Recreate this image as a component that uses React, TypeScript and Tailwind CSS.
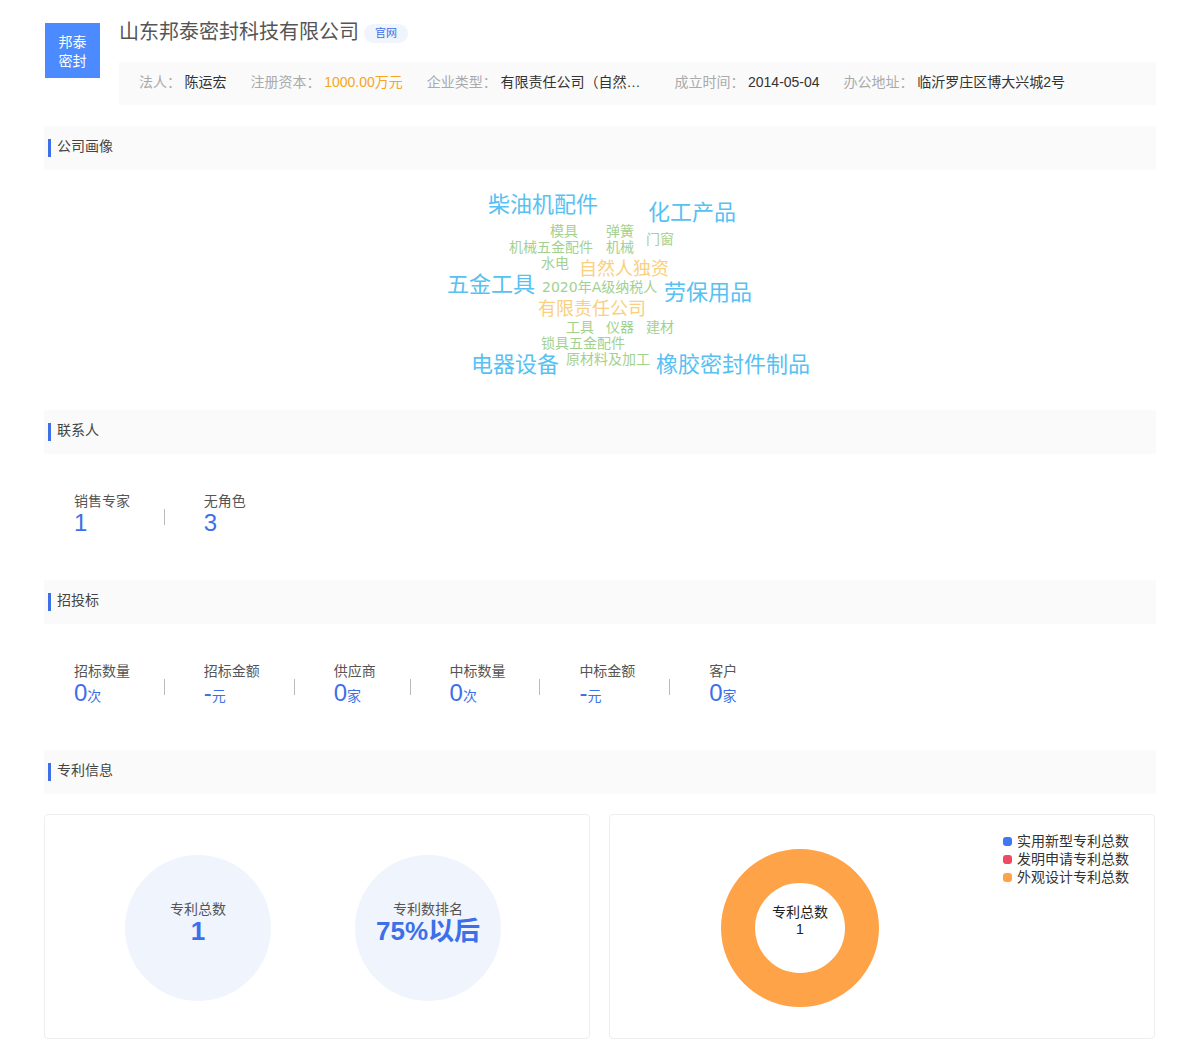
const sans = 'font-["Liberation_Sans","Noto_Sans_CJK_SC",sans-serif]';

const infoItems = [
  { label: '法人：', value: '陈运宏', valueClass: 'text-[#333]' },
  { label: '注册资本：', value: '1000.00万元', valueClass: 'text-[#f5a623]' },
  { label: '企业类型：', value: '有限责任公司（自然…', valueClass: 'text-[#333] w-[150px] whitespace-nowrap' },
  { label: '成立时间：', value: '2014-05-04', valueClass: 'text-[#333]' },
  { label: '办公地址：', value: '临沂罗庄区博大兴城2号', valueClass: 'text-[#333]' },
];

const words = [
  { text: '柴油机配件', className: 'left-[444px] top-[24px] text-[22px] text-[#56c1f2]' },
  { text: '化工产品', className: 'left-[604px] top-[32px] text-[22px] text-[#56c1f2]' },
  { text: '模具', className: 'left-[506px] top-[54px] text-[14px] text-[#a3d18f]' },
  { text: '弹簧', className: 'left-[562px] top-[54px] text-[14px] text-[#a3d18f]' },
  { text: '门窗', className: 'left-[602px] top-[62px] text-[14px] text-[#a3d18f]' },
  { text: '机械五金配件', className: 'left-[465px] top-[70px] text-[14px] text-[#a3d18f]' },
  { text: '机械', className: 'left-[562px] top-[70px] text-[14px] text-[#a3d18f]' },
  { text: '水电', className: 'left-[497px] top-[86px] text-[14px] text-[#a3d18f]' },
  { text: '自然人独资', className: 'left-[535px] top-[90px] text-[18px] text-[#fad07f]' },
  { text: '五金工具', className: 'left-[403px] top-[104px] text-[22px] text-[#56c1f2]' },
  { text: '2020年A级纳税人', className: 'left-[498px] top-[110px] text-[14px] text-[#a3d18f]' },
  { text: '劳保用品', className: 'left-[620px] top-[112px] text-[22px] text-[#56c1f2]' },
  { text: '有限责任公司', className: 'left-[494px] top-[130px] text-[18px] text-[#fad07f]' },
  { text: '工具', className: 'left-[522px] top-[150px] text-[14px] text-[#a3d18f]' },
  { text: '仪器', className: 'left-[562px] top-[150px] text-[14px] text-[#a3d18f]' },
  { text: '建材', className: 'left-[602px] top-[150px] text-[14px] text-[#a3d18f]' },
  { text: '锁具五金配件', className: 'left-[497px] top-[166px] text-[14px] text-[#a3d18f]' },
  { text: '原材料及加工', className: 'left-[522px] top-[182px] text-[14px] text-[#a3d18f]' },
  { text: '电器设备', className: 'left-[427px] top-[184px] text-[22px] text-[#56c1f2]' },
  { text: '橡胶密封件制品', className: 'left-[612px] top-[184px] text-[22px] text-[#56c1f2]' },
];

const contacts = [
  { label: '销售专家', value: '1', unit: '' },
  { label: '无角色', value: '3', unit: '' },
];

const bids = [
  { label: '招标数量', value: '0', unit: '次' },
  { label: '招标金额', value: '-', unit: '元' },
  { label: '供应商', value: '0', unit: '家' },
  { label: '中标数量', value: '0', unit: '次' },
  { label: '中标金额', value: '-', unit: '元' },
  { label: '客户', value: '0', unit: '家' },
];

const legend = [
  { label: '实用新型专利总数', color: 'bg-[#3f78f2]' },
  { label: '发明申请专利总数', color: 'bg-[#ee4a63]' },
  { label: '外观设计专利总数', color: 'bg-[#ffa348]' },
];

function SectionTitle({ title }: { title: string }) {
  return (
    <div className="h-11 bg-[#fafafa] flex items-start pl-1 pt-[13px]">
      <span className="w-[3px] h-[18px] bg-[#3d6fe8]" />
      <span className="ml-1.5 text-[14px] leading-[14px] text-[#444]">{title}</span>
    </div>
  );
}

function StatRow({ items }: { items: { label: string; value: string; unit: string }[] }) {
  return (
    <div className="flex pl-[30px]">
      {items.map((item, i) => (
        <div key={item.label} className="flex items-start">
          <div className="flex flex-col">
            <span className="text-[14px] leading-5 text-[#555]">{item.label}</span>
            <span className="h-6 leading-6 text-[24px] text-[#3d6fe8] whitespace-nowrap">
              {item.value}
              <span className="text-[14px]">{item.unit}</span>
            </span>
          </div>
          {i < items.length - 1 && <span className="ml-[33.85px] mr-[39px] mt-[18px] w-px h-4 bg-[#bbb]" />}
        </div>
      ))}
    </div>
  );
}

function Circle({ label, value }: { label: string; value: string }) {
  return (
    <div className="w-[146px] h-[146px] rounded-full bg-[#eff4fd] flex flex-col items-center pt-[45px]">
      <span className="text-[14px] leading-[18px] text-[#555]">{label}</span>
      <span className="text-[26px] leading-[26px] font-bold text-[#3d6fe8] whitespace-nowrap">{value}</span>
    </div>
  );
}

export default function App() {
  return (
    <div className={`w-[1200px] h-[1061px] bg-white pl-11 pr-11 pt-[18px] overflow-hidden ${sans}`}>
      <div className="flex h-[87px]">
        <div className="w-[55px] h-[55px] ml-px mt-[5px] pt-0.5 bg-[#4b8bff] text-white text-[14px] leading-[19px] flex items-center justify-center text-center">
          邦泰<br />密封
        </div>
        <div className="ml-[19px] flex-1 flex flex-col">
          <div className="flex items-center h-[26px]">
            <h1 className="pt-0.5 text-[20px] leading-[26px] text-[#555]">山东邦泰密封科技有限公司</h1>
            <span className="ml-[5px] mt-1 w-11 h-[19px] rounded-full bg-[#f0f4fc] text-[#3d6fe8] text-[11px] leading-[19px] text-center">官网</span>
          </div>
          <div className="mt-[18px] h-[43px] pb-0.5 bg-[#fafafa] flex items-center pl-5 text-[14px]">
            {infoItems.map((item) => (
              <div key={item.label} className="flex mr-6">
                <span className="text-[#aaa] mr-[3.6px]">{item.label}</span>
                <span className={item.valueClass}>{item.value}</span>
              </div>
            ))}
          </div>
        </div>
      </div>

      <div className="mt-[21px]">
        <SectionTitle title="公司画像" />
        <div className="relative h-[240px] font-['DejaVu_Sans','Noto_Sans_CJK_SC',sans-serif]">
          {words.map((w) => (
            <span key={w.text} className={`absolute leading-none whitespace-nowrap ${w.className}`}>{w.text}</span>
          ))}
        </div>
      </div>

      <SectionTitle title="联系人" />
      <div className="h-[126px] pt-[37px]">
        <StatRow items={contacts} />
      </div>

      <SectionTitle title="招投标" />
      <div className="h-[126px] pt-[37px]">
        <StatRow items={bids} />
      </div>

      <SectionTitle title="专利信息" />
      <div className="mt-5 flex gap-[19px]">
        <div className="w-[546px] h-[225px] border border-[#eee] rounded flex pl-20 pt-10 gap-[84px]">
          <Circle label="专利总数" value="1" />
          <Circle label="专利数排名" value="75%以后" />
        </div>
        <div className="relative w-[546px] h-[225px] border border-[#eee] rounded">
          <svg className="absolute left-[110px] top-[33px]" width="160" height="160" viewBox="0 0 160 160">
            <circle cx="80" cy="80" r="62" fill="none" stroke="#ffa348" strokeWidth="34" />
          </svg>
          <div className="absolute left-[110px] top-[89px] w-[160px] text-center text-[14px] leading-[17px] text-[#222]">
            专利总数<br />1
          </div>
          <div className="absolute left-[393px] top-[17px] flex flex-col">
            {legend.map((l) => (
              <div key={l.label} className="flex items-center h-[18px]">
                <span className={`w-[9px] h-[9px] rounded-[3px] ${l.color}`} />
                <span className="ml-[5px] text-[14px] text-[#333]">{l.label}</span>
              </div>
            ))}
          </div>
        </div>
      </div>
    </div>
  );
}
